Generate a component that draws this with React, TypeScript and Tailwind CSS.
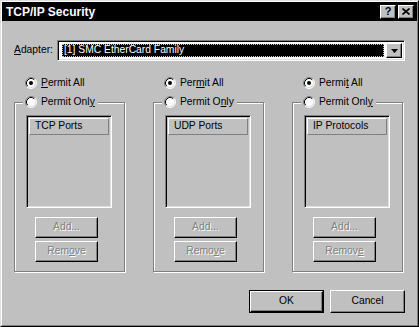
import React from "react";

const raised =
  "border border-t-white border-l-white border-r-black border-b-black shadow-[inset_-1px_-1px_0_#808080]";
const sunken =
  "border border-t-[#808080] border-l-[#808080] border-r-white border-b-white shadow-[inset_1px_1px_0_#000,inset_-1px_-1px_0_#dfdfdf]";

// text with one underlined access key
function Mn({ text, at }: { text: string; at: number }) {
  if (at < 0) return <>{text}</>;
  return (
    <>
      {text.slice(0, at)}
      <span className="underline underline-offset-[1px]">{text[at]}</span>
      {text.slice(at + 1)}
    </>
  );
}

function Radio({ checked }: { checked?: boolean }) {
  return (
    <svg width="12" height="12" viewBox="0 0 12 12" className="shrink-0">
      <circle cx="6" cy="6" r="5" fill="#fff" />
      <path d="M2.11 9.89A5.5 5.5 0 0 1 9.89 2.11" fill="none" stroke="#808080" />
      <path d="M9.89 2.11A5.5 5.5 0 0 1 2.11 9.89" fill="none" stroke="#fff" />
      <path d="M2.82 9.18A4.5 4.5 0 0 1 9.18 2.82" fill="none" stroke="#000" />
      <path d="M9.18 2.82A4.5 4.5 0 0 1 2.82 9.18" fill="none" stroke="#dfdfdf" />
      {checked && <circle cx="6" cy="6" r="2" fill="#000" />}
    </svg>
  );
}

function DisabledButton({ label, at, className = "" }: { label: string; at: number; className?: string }) {
  return (
    <div
      className={`w-[63px] h-[21px] flex items-center justify-center text-[#808080] [text-shadow:1px_1px_0_#fff] ${raised} ${className}`}
    >
      <span>
        <Mn text={label} at={at} />
      </span>
    </div>
  );
}

type Col = { list: string; allAt: number; onlyAt: number; removeAt: number };

const columns: Col[] = [
  { list: "TCP Ports", allAt: 0, onlyAt: 10, removeAt: 3 },
  { list: "UDP Ports", allAt: 3, onlyAt: 8, removeAt: 4 },
  { list: "IP Protocols", allAt: 5, onlyAt: 10, removeAt: 5 },
];

function Column({ col }: { col: Col }) {
  return (
    <div className="w-[111px] flex flex-col">
      <div className="h-4 flex items-center pl-[11px] gap-[4px]">
        <Radio checked />
        <span>
          <Mn text="Permit All" at={col.allAt} />
        </span>
      </div>
      <fieldset className="mt-[3px] border border-[#808080] shadow-[inset_1px_1px_0_#fff,1px_1px_0_#fff] pl-[11px] pb-[9px]">
        <legend className="-ml-[3px] px-[2px] bg-[#c0c0c0]">
          <div className="h-4 flex items-center gap-[4px] pr-[1px]">
            <Radio />
            <span>
              <Mn text="Permit Only" at={col.onlyAt} />
            </span>
          </div>
        </legend>
        <div className={`mt-[5px] w-[86px] h-[93px] p-[2px] ${sunken}`}>
          <div className="h-[17px] flex items-center pl-[5px] border border-t-white border-l-white border-r-[#808080] border-b-[#808080]">
            {col.list}
          </div>
        </div>
        <DisabledButton label="Add..." at={-1} className="mt-[9px] ml-[9px]" />
        <DisabledButton label="Remove" at={col.removeAt} className="mt-[3px] ml-[9px]" />
      </fieldset>
    </div>
  );
}

export default function App() {
  return (
    <div className="w-[419px] h-[327px] bg-[#c0c0c0] border border-t-[#dfdfdf] border-l-[#dfdfdf] border-r-black border-b-black font-['Liberation_Sans',Arial,sans-serif] text-[10.3px] leading-none text-black select-none">
      <div className="h-full border border-t-white border-l-white border-r-[#808080] border-b-[#808080] flex flex-col">
        {/* title bar */}
        <div className="h-[19px] bg-black flex items-center pl-[4px] pr-[3px]">
          <span className="text-white font-bold text-[12px]">TCP/IP Security</span>
          <div className="ml-auto flex gap-[2px]">
            <div className={`w-4 h-[14px] bg-[#c0c0c0] flex items-center justify-center font-bold text-[11px] ${raised}`}>
              ?
            </div>
            <div className={`w-4 h-[14px] bg-[#c0c0c0] flex items-center justify-center ${raised}`}>
              <svg width="8" height="7" viewBox="0 0 8 7">
                <path d="M0.5 0.5L7.5 6.5M7.5 0.5L0.5 6.5" stroke="#000" strokeWidth="1.6" />
              </svg>
            </div>
          </div>
        </div>

        <div className="flex flex-col pl-[12px] pr-[12px]">
          {/* adapter */}
          <div className="mt-[19px] flex items-center">
            <span className="w-[43px]">
              <Mn text="Adapter:" at={0} />
            </span>
            <div className={`w-[348px] h-[21px] bg-white p-[2px] flex ${sunken}`}>
              <div className="flex-1 mx-[2px] my-[1px] bg-black text-white flex items-center pl-[1px] border border-dotted border-[#c0c0c0]">
                [1] SMC EtherCard Family
              </div>
              <div className={`w-4 h-full bg-[#c0c0c0] flex items-center justify-center ${raised}`}>
                <svg width="7" height="4" viewBox="0 0 7 4">
                  <path d="M0 0H7L3.5 4Z" fill="#000" />
                </svg>
              </div>
            </div>
          </div>

          {/* three groups */}
          <div className="mt-[14px] flex gap-[28px]">
            {columns.map((c) => (
              <Column key={c.list} col={c} />
            ))}
          </div>

          {/* dialog buttons */}
          <div className="mt-[18px] flex justify-end gap-[6px]">
            <div className="w-[75px] h-[23px] border border-black">
              <div className={`w-full h-full flex items-center justify-center ${raised}`}>OK</div>
            </div>
            <div className={`w-[75px] h-[23px] flex items-center justify-center ${raised}`}>Cancel</div>
          </div>
        </div>
      </div>
    </div>
  );
}
